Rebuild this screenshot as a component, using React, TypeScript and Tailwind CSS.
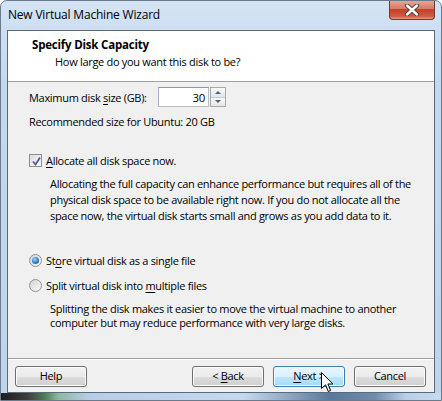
import React from 'react';

const U: React.FC<{ children: React.ReactNode }> = ({ children }) => (
  <span className="underline decoration-1 underline-offset-[2px]">{children}</span>
);

const Button: React.FC<{ children: React.ReactNode; hot?: boolean }> = ({ children, hot }) => (
  <div
    className={`w-[72px] h-[21px] rounded-[3px] border flex items-center justify-center text-[11px] whitespace-pre shadow-[inset_0_0_0_1px_#fcfcfc] ${
      hot
        ? 'border-[#3c7fb1] bg-[linear-gradient(#eaf6fd_0%,#d9f0fc_50%,#bee6fd_50%,#a7d9f5_100%)]'
        : 'border-[#707070] bg-[linear-gradient(#f2f2f2_0%,#ebebeb_50%,#dddddd_50%,#cfcfcf_100%)]'
    }`}
  >
    {children}
  </div>
);

const Radio: React.FC<{ on?: boolean }> = ({ on }) => (
  <div className="w-[13px] h-[13px] rounded-full border border-[#8e8f8f] bg-[linear-gradient(135deg,#d4d4d4,#fafafa)] flex items-center justify-center">
    {on && (
      <div className="w-[7px] h-[7px] rounded-full bg-[radial-gradient(circle_at_40%_35%,#a9dcff_0%,#3a8ad8_45%,#0f4a9a_100%)]" />
    )}
  </div>
);

const Checkbox: React.FC = () => (
  <div className="w-[13px] h-[13px] border border-[#8e8f8f] bg-[linear-gradient(135deg,#dcdcdc,#fbfbfb)] p-[1px]">
    <svg width="11" height="11" viewBox="0 0 11 11">
      <path d="M2 5.5 L4.5 8.5 L9 1.5" fill="none" stroke="#4a5f97" strokeWidth="1.8" />
    </svg>
  </div>
);

export default function App() {
  return (
    <div className="w-[442px] h-[401px] overflow-hidden relative rounded-t-[7px] border border-[#6b7b8c] bg-[linear-gradient(#d3e3f4,#c4d9ef_20%,#bfd4ec)] font-['Open_Sans','Noto_Sans',sans-serif] text-black">
      <div className="h-[29px] flex items-center pl-[7px] text-[12px] tracking-[-0.2px] pb-[1px]">New Virtual Machine Wizard</div>

      {/* close */}
      <div className="absolute top-[-1px] right-[6px] w-[46px] h-[20px] rounded-b-[4px] border border-[#6d3a34] border-t-0 bg-[linear-gradient(#e9a99b_0%,#d77a66_45%,#c4402a_50%,#cf5a3f_85%,#e79a7a_100%)] flex items-center justify-center">
        <svg width="16" height="12" viewBox="0 0 16 12">
          <path d="M3 1.5 L13 10.5 M13 1.5 L3 10.5" stroke="#3b3b3b" strokeWidth="4.2" strokeLinecap="round" />
          <path d="M3 1.5 L13 10.5 M13 1.5 L3 10.5" stroke="#ffffff" strokeWidth="2.4" strokeLinecap="round" />
        </svg>
      </div>

      <div className="mx-[6px] h-[363px] border border-[#586a7e] bg-[#f0f0f0] flex flex-col tracking-[-0.3px]">
        <div className="h-[51px] bg-white border-b border-[#a0a0a0] pt-[6px] pl-[24px] text-[11px] leading-[15px]">
          <div className="font-bold text-[11.5px] tracking-[-0.2px]">Specify Disk Capacity</div>
          <div className="pl-[23px] mt-[2px]">How large do you want this disk to be?</div>
        </div>

        <div className="flex-1 flex flex-col pl-[21px] text-[11px] leading-[15px]">
          <div className="mt-[5px] h-[20px] flex items-center">
            <div className="w-[129px]">
              Maximum disk <U>s</U>ize (GB):
            </div>
            <div className="w-[51px] h-[20px] border border-[#b5c0cb] border-t-[#7f98b4] border-l-[#9fb2c6] bg-white flex items-center justify-end pr-[3px] text-[11.5px]">
              30
            </div>
            <div className="ml-[1px] w-[16px] h-[20px] border border-[#a9a9a9] flex flex-col bg-[#f4f4f4]">
              <div className="flex-1 border-b border-[#c9c9c9] bg-[linear-gradient(#fafafa,#e6e6e6)] flex items-center justify-center">
                <div className="w-0 h-0 border-l-[3px] border-r-[3px] border-b-[3px] border-l-transparent border-r-transparent border-b-[#4d6185]" />
              </div>
              <div className="flex-1 bg-[linear-gradient(#fafafa,#e6e6e6)] flex items-center justify-center">
                <div className="w-0 h-0 border-l-[3px] border-r-[3px] border-t-[3px] border-l-transparent border-r-transparent border-t-[#4d6185]" />
              </div>
            </div>
          </div>

          <div className="mt-[7px]">Recommended size for Ubuntu: 20 GB</div>

          <div className="mt-[24px] flex items-center gap-[4px]">
            <Checkbox />
            <div>
              <U>A</U>llocate all disk space now.
            </div>
          </div>

          <div className="ml-[21px] mt-[8px] leading-[16px] whitespace-nowrap">
            <div>Allocating the full capacity can enhance performance but requires all of the</div>
            <div>physical disk space to be available right now. If you do not allocate all the</div>
            <div>space now, the virtual disk starts small and grows as you add data to it.</div>
          </div>

          <div className="mt-[29px] flex items-center gap-[4px]">
            <Radio on />
            <div>
              St<U>o</U>re virtual disk as a single file
            </div>
          </div>

          <div className="mt-[10px] flex items-center gap-[4px]">
            <Radio />
            <div>
              Split virtual disk into <U>m</U>ultiple files
            </div>
          </div>

          <div className="ml-[21px] mt-[9px] leading-[14px] whitespace-nowrap">
            <div>Splitting the disk makes it easier to move the virtual machine to another</div>
            <div>computer but may reduce performance with very large disks.</div>
          </div>
        </div>

        <div className="border-t border-[#a0a0a0] shadow-[inset_0_1px_0_#ffffff] h-[34px] flex items-center pl-[7px] pr-[8px] pt-[2px] text-[11px]">
          <Button>Help</Button>
          <div className="flex-1" />
          <Button>
            {'< '}<U>B</U>ack
          </Button>
          <div className="w-[9px]" />
          <div className="relative">
            <Button hot>
              <U>N</U>{'ext >'}
            </Button>
            <svg className="absolute left-[48px] top-[6px]" width="13" height="21" viewBox="0 0 13 21">
              <path d="M0.5 0.5 L0.5 16.5 L4.5 12.8 L7.3 19.5 L9.6 18.5 L6.9 12 L12 12 Z" fill="#ffffff" stroke="#000000" strokeWidth="1" strokeLinejoin="miter" />
            </svg>
          </div>
          <div className="w-[9px]" />
          <Button>Cancel</Button>
        </div>
      </div>

      <div className="h-[7px] bg-[linear-gradient(90deg,#1d1d1d_0%,#3c3c3c_6%,#4e7d55_10%,#8fb7a0_13%,#b7cde6_20%,#c5d9ee_55%,#5a7899_75%,#6f8cab_85%,#b9cfe7_92%,#c7dbf0_100%)]" />
    </div>
  );
}
